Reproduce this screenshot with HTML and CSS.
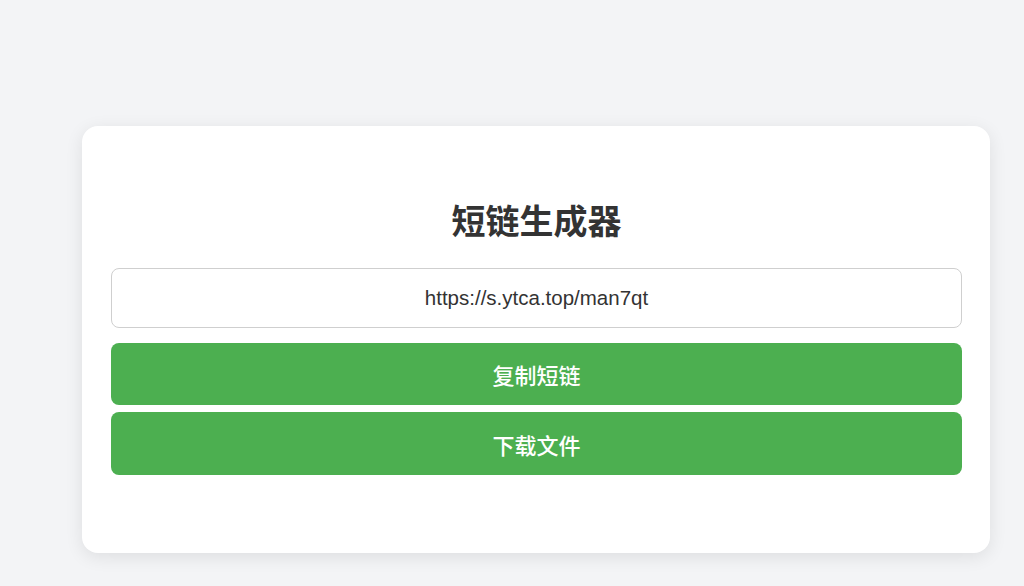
FILE: index.html
```html
<!DOCTYPE html>
<html lang="zh-CN">
<head>
<meta charset="utf-8">
<title>短链生成器</title>
<link rel="stylesheet" href="styles.css">
</head>
<body>
<main class="card">
  <h1 class="title">短链生成器</h1>
  <div class="link-box">https://s.ytca.top/man7qt</div>
  <button class="btn" type="button">复制短链</button>
  <button class="btn" type="button">下载文件</button>
</main>
</body>
</html>
```
FILE: styles.css
```css
html, body {
  margin: 0;
  padding: 0;
}
body {
  background: #f3f4f6;
  font-family: "Liberation Sans", "Noto Sans CJK SC", sans-serif;
  color: #333;
  padding: 126px 34px 0 82px;
  height: 586px;
  box-sizing: border-box;
  overflow: hidden;
}
.card {
  width: 908px;
  height: 427px;
  box-sizing: border-box;
  background: #fff;
  border-radius: 16px;
  box-shadow: 0 4px 18px rgba(0, 0, 0, 0.09);
  padding: 28px 28px 0 29px;
  display: flex;
  flex-direction: column;
}
.title {
  margin: 46px 0 28px;
  height: 40px;
  line-height: 40px;
  text-align: center;
  font-family: "Noto Sans CJK SC", sans-serif;
  font-size: 34px;
  font-weight: 700;
  color: #333;
}
.link-box {
  height: 60px;
  box-sizing: border-box;
  border: 1px solid #cfcfcf;
  border-radius: 8px;
  display: flex;
  align-items: center;
  justify-content: center;
  font-size: 20.5px;
  color: #333;
  margin-bottom: 15px;
}
.btn {
  height: 62px;
  border: none;
  border-radius: 8px;
  background: #4caf50;
  color: #fff;
  font-family: "Noto Sans CJK SC", sans-serif;
  font-size: 22px;
  font-weight: 500;
  padding: 0;
  margin: 0 0 7px;
  cursor: pointer;
}
.btn + .btn {
  height: 63px;
}
```
